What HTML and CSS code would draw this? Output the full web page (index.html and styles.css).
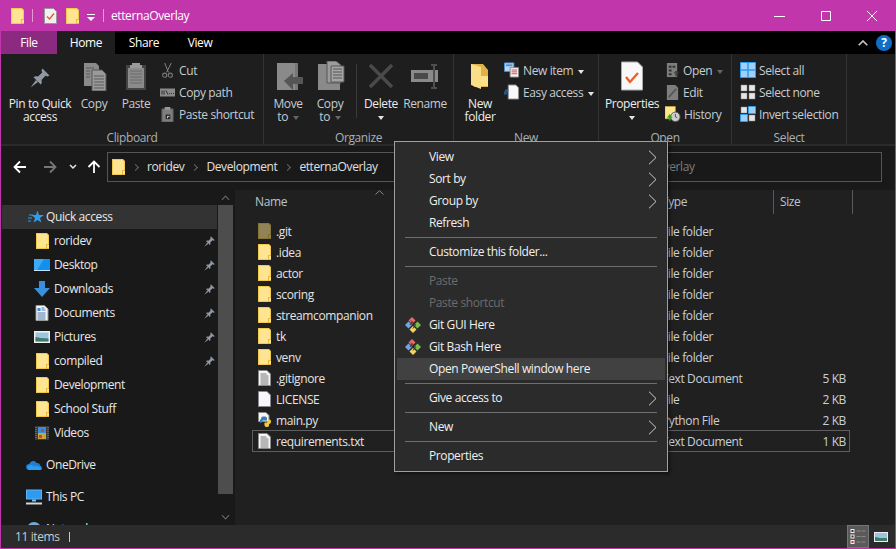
FILE: index.html
```html
<!DOCTYPE html>
<html lang="en">
<head>
<meta charset="utf-8">
<title>etternaOverlay</title>
<link rel="stylesheet" href="styles.css">
</head>
<body>
<svg class="defs" width="0" height="0" aria-hidden="true">
  <defs>
    <symbol id="folder" viewBox="0 0 13 16">
      <path d="M0 0h11l2 2v14H0z" fill="#f2c94f"/>
      <path d="M1 1h9.500l1.500 1.500V15H1z" fill="#ffe591"/>
      <path d="M10 11h3v5h-3z" fill="#e8bb3d"/>
      <path d="M11 12h2v3h-2z" fill="#ffe591"/>
    </symbol>
    <symbol id="pin" viewBox="0 0 20 20">
      <path d="M12.500 0.500 19.500 7.500 17.500 8.500 15.500 7.800 11.500 12c.6 2 .2 3.500-.8 4.500L3.500 9.300c1-1 2.500-1.300 4.500-.8l4.200-4-.7-2z" fill="#8f98a3"/>
      <path d="M6 12 0.500 19.500 8 14z" fill="#8f98a3"/>
    </symbol>
    <symbol id="doc" viewBox="0 0 13 16">
      <path d="M.5.500h8.500l3.500 3.500v11.500H.5z" fill="#f6f6f6" stroke="#8a8a8a"/>
      <path d="M2.500 4h6M2.500 6h8M2.500 8h8M2.500 10h8M2.500 12h8M2.500 14h8" stroke="#777" stroke-width="1"/>
    </symbol>
    <symbol id="blank" viewBox="0 0 13 16">
      <path d="M.5.500h8.500l3.500 3.500v11.500H.5z" fill="#f6f8fc" stroke="#8a8a8a"/>
    </symbol>
    <symbol id="git" viewBox="0 0 16 16">
      <path d="M7 0 10.500 3.500 7 7 3.500 3.500z" fill="#ea6a70"/>
      <path d="M12.500 4.500 16 8 12.500 11.500 9 8z" fill="#76c043"/>
      <path d="M8 9 11.500 12.500 8 16 4.500 12.500z" fill="#f4d35e"/>
      <path d="M3.500 4.500 7 8 3.500 11.500 0 8z" fill="#6da5ee"/>
      <path d="M6 3.500 10.500 8 8 11.500M7 5 5 8" fill="none" stroke="#333" stroke-width="1"/>
    </symbol>
    <symbol id="chev" viewBox="0 0 9 15">
      <path d="M1 .700 8 7.500 1 14.300" fill="none" stroke="#c6ced6" stroke-width="1"/>
    </symbol>
  </defs>
</svg>
<div class="window">
  <header class="titlebar">
    <svg class="ic-folder tb-first"><use href="#folder"/></svg>
    <span class="tb-sep"></span>
    <svg class="tb-check" viewBox="0 0 13 16"><path d="M.5.500h9l3 3v12H.5z" fill="#f0f0f0" stroke="#999"/><path d="M3 8.500 5.500 11 10 5.500" fill="none" stroke="#e2572b" stroke-width="1.300"/></svg>
    <svg class="ic-folder tb-folder"><use href="#folder"/></svg>
    <svg class="tb-drop" viewBox="0 0 8 8"><path d="M0 1h8v1H0z" fill="#fff"/><path d="M0 4h8L4 8z" fill="#fff"/></svg>
    <span class="tb-sep tb-sep2"></span>
    <span class="tb-title">etternaOverlay</span>
    <div class="winbtns">
      <svg class="winbtn" viewBox="0 0 46 30"><path d="M17 15.500h11" stroke="#fff"/></svg>
      <svg class="winbtn" viewBox="0 0 46 30"><path d="M18.500 10.500h9v9h-9z" fill="none" stroke="#fff"/></svg>
      <svg class="winbtn" viewBox="0 0 46 30"><path d="M18 10l10 10M28 10 18 20" stroke="#fff"/></svg>
    </div>
  </header>
  <nav class="tabs">
    <span class="tab tab-file">File</span>
    <span class="tab tab-home">Home</span>
    <span class="tab tab-share">Share</span>
    <span class="tab tab-view">View</span>
    <div class="tabs-right">
      <svg class="collapse" viewBox="0 0 10 6"><path d="M.7 5.300 5 1l4.300 4.300" fill="none" stroke="#c8c8c8" stroke-width="1.600"/></svg>
      <span class="help">?</span>
    </div>
  </nav>
  <section class="ribbon">
    <div class="group g-clip">
      <div class="group-body">
        <div class="big w-pin"><svg class="pinbig"><use href="#pin"/></svg><span class="lbl bright">Pin to Quick<br>access</span></div>
        <div class="big w-copy">
          <svg class="bigicon" viewBox="0 0 30 30"><path d="M5 2h12l3 3v20H5z" fill="#8a8a8a"/><path d="M13 9h10l4 4v17H13z" fill="#9a9a9a" stroke="#555"/><path d="M15 15h10M15 18h10M15 21h10M15 24h10M15 27h10M7 7h8M7 10h4M7 13h4M7 16h4" stroke="#5a5a5a"/></svg>
          <span class="lbl">Copy</span>
        </div>
        <div class="big w-paste">
          <svg class="bigicon" viewBox="0 0 30 30"><path d="M5 4h20v25H5z" fill="#444"/><path d="M7 7h16v20H7z" fill="#8b8b8b"/><path d="M11 2h8v2h2v3H9V4h2z" fill="#9a9a9a"/><path d="M9 10h12M9 13h12M9 16h12M9 19h12M9 22h12" stroke="#6a6a6a"/></svg>
          <span class="lbl">Paste</span>
        </div>
        <div class="small-col sc-clip">
          <div class="small"><svg class="smicon" viewBox="0 0 14 16"><path d="M4 0l4 10M11 0 6 10" stroke="#888" fill="none"/><circle cx="4" cy="13" r="2.200" fill="none" stroke="#777" stroke-width="1.200"/><circle cx="10" cy="13" r="2.200" fill="none" stroke="#777" stroke-width="1.200"/></svg><span>Cut</span></div>
          <div class="small"><svg class="smicon" viewBox="0 0 15 10"><path d="M0 1h15v8H0z" fill="#8a8a8a"/><path d="M2 3v4M4 3v4M6 3l2 4M9 6h1M11 6h1M13 6h1" stroke="#333"/></svg><span>Copy path</span></div>
          <div class="small"><svg class="smicon" viewBox="0 0 14 16"><path d="M1 2h12v14H1z" fill="#7e7e7e" stroke="#555"/><path d="M4 0h6v3H4z" fill="#999"/><path d="M5 8h5v5H5z" fill="#2a2a2a"/><path d="M7 12V10h2" stroke="#ddd" fill="none"/></svg><span>Paste shortcut</span></div>
        </div>
      </div>
      <div class="group-label">Clipboard</div>
    </div>
    <div class="group g-org">
      <div class="group-body">
        <div class="big w-move">
          <svg class="bigicon" viewBox="0 0 30 30"><path d="M4 2h21v27H4z" fill="#8a8a8a"/><path d="M25 2v27h-3V2z" fill="#777"/><path d="M11 20 20 12v4h10v7H20v6z" fill="#565656"/></svg>
          <span class="lbl">Move<br>to <i class="dim-caret"></i></span>
        </div>
        <div class="big w-copyto">
          <svg class="bigicon" viewBox="0 0 30 30"><path d="M3 3h22v26H3z" fill="#8a8a8a"/><path d="M12 0h9l5 4v18H12z" fill="#9c9c9c" stroke="#555"/><path d="M16 5h13v16H16z" fill="#a5a5a5" stroke="#555"/><path d="M18 8h9M18 11h9M18 14h9M18 17h9" stroke="#555"/></svg>
          <span class="lbl">Copy<br>to <i class="dim-caret"></i></span>
        </div>
        <span class="inner-sep"></span>
        <div class="big w-del">
          <svg class="bigicon" viewBox="0 0 30 30"><path d="M4 4 26 26M26 4 4 26" stroke="#4a4a4a" stroke-width="3.500"/></svg>
          <span class="lbl bright">Delete<br><i class="caret"></i></span>
        </div>
        <div class="big w-ren">
          <svg class="bigicon" viewBox="0 0 30 30"><path d="M1 9h27v12H1z" fill="#8a8a8a"/><path d="M4 12h14v6H4z" fill="#4a4a4a"/><path d="M21 4h6M21 27h6M24 4v23" stroke="#4f4f4f" stroke-width="2"/></svg>
          <span class="lbl">Rename</span>
        </div>
      </div>
      <div class="group-label">Organize</div>
    </div>
    <div class="group g-new">
      <div class="group-body">
        <div class="big w-newf">
          <svg class="bigicon" viewBox="0 0 30 30"><path d="M6 3h12l5 6v17H9z" fill="#e0b348"/><path d="M6 3l10 3v22l-10-4z" fill="#fbdf88"/><path d="M16 15h7v10h-7z" fill="#ffe186"/></svg>
          <span class="lbl bright">New<br>folder</span>
        </div>
        <div class="small-col sc-new">
          <div class="small"><svg class="smicon16" viewBox="0 0 17 16"><path d="M.5.500h10v9H.5z" fill="#bcd6ee" stroke="#4a90d9"/><path d="M2 2h7v2H2z" fill="#4a90d9"/><path d="M6.500 5.500h9v10h-9z" fill="#f8f8f8" stroke="#888"/><path d="M8 8h6M8 10h6M8 12h6" stroke="#c44"/></svg><span>New item <i class="caret-r"></i></span></div>
          <div class="small"><svg class="smicon16" viewBox="0 0 17 16"><path d="M4.500.500h8l3 3v12h-11z" fill="#f8f8f8" stroke="#888"/><path d="M1 6h4M0 8h4M0 10h3" stroke="#2f86d8"/></svg><span>Easy access <i class="caret-r"></i></span></div>
        </div>
      </div>
      <div class="group-label">New</div>
    </div>
    <div class="group g-open">
      <div class="group-body">
        <div class="big w-prop">
          <svg class="bigicon" viewBox="0 0 30 30"><path d="M4.500 1h16l5 5v23h-21z" fill="#f8f8f8" stroke="#aaa"/><path d="M9 16l4 5 8-9" fill="none" stroke="#e8622c" stroke-width="2.400"/></svg>
          <span class="lbl bright">Properties<br><i class="caret"></i></span>
        </div>
        <div class="small-col sc-open">
          <div class="small"><svg class="smicon" viewBox="0 0 14 16"><path d="M1 0h11v15H1z" fill="#7e7e7e"/><path d="M3 3h3v2H3zM7 3h3v2H7zM3 7h3v2H3zM3 11h3v2H3z" fill="#333"/><path d="M8 11l3-3 3 3h-2v3h-2v-3z" fill="#444"/></svg><span>Open <i class="caret-dim"></i></span></div>
          <div class="small"><svg class="smicon" viewBox="0 0 14 16"><path d="M1 0h9l3 3v13H1z" fill="#7e7e7e"/><path d="M3 13 11 4" stroke="#555" stroke-width="2"/></svg><span>Edit</span></div>
          <div class="small"><svg class="smicon16" viewBox="0 0 17 16"><path d="M0 0h11v13H0z" fill="#fde68c" stroke="#d8b33f" stroke-width=".6"/><circle cx="11" cy="11" r="5" fill="#cfcfcf" stroke="#555"/><path d="M11 8v3l2 1" stroke="#444" fill="none"/><path d="M2 12 5 8l3 4H6v3H4v-3z" fill="#2ea52e"/></svg><span>History</span></div>
        </div>
      </div>
      <div class="group-label">Open</div>
    </div>
    <div class="group g-sel">
      <div class="group-body">
        <div class="small-col sc-sel">
          <div class="small"><svg class="smicon16" viewBox="0 0 16 16"><path d="M.5.500h15v15H.5z" fill="#9fd0fb" stroke="#2d9bf0"/><path d="M8 0v16M0 8h16" stroke="#2d9bf0" stroke-width="1.500"/></svg><span>Select all</span></div>
          <div class="small"><svg class="smicon16" viewBox="0 0 16 16"><path d="M1 1h6v6H1zM9 1h6v6H9zM1 9h6v6H1zM9 9h6v6H9z" fill="#e6e6e6" stroke="#888" stroke-width=".5"/></svg><span>Select none</span></div>
          <div class="small"><svg class="smicon16" viewBox="0 0 16 16"><path d="M1 1h6v6H1zM9 9h6v6H9z" fill="#e6e6e6" stroke="#888" stroke-width=".5"/><path d="M8.500.500h7v7h-7zM.5 8.500h7v7h-7z" fill="#9fd0fb" stroke="#2d9bf0"/></svg><span>Invert selection</span></div>
        </div>
      </div>
      <div class="group-label">Select</div>
    </div>
  </section>
  <div class="addressbar">
    <svg class="navarrow" viewBox="0 0 14 14"><path d="M13 7H2M7 1.500 1.500 7 7 12.500" fill="none" stroke="#fff" stroke-width="1.800"/></svg>
    <svg class="navarrow fwd" viewBox="0 0 14 14"><path d="M1 7h11M7 1.500 12.500 7 7 12.500" fill="none" stroke="#777" stroke-width="1.800"/></svg>
    <svg class="navchev" viewBox="0 0 8 6"><path d="M1 1l3 3 3-3" fill="none" stroke="#e6e6e6" stroke-width="1.500"/></svg>
    <svg class="navarrow up" viewBox="0 0 14 14"><path d="M7 13V2M1.500 7 7 1.500 12.500 7" fill="none" stroke="#fff" stroke-width="1.800"/></svg>
    <div class="addrbox">
      <svg class="ic-folder"><use href="#folder"/></svg>
      <i class="crumb-sep"></i><span>roridev</span>
      <i class="crumb-sep"></i><span>Development</span>
      <i class="crumb-sep"></i><span>etternaOverlay</span>
    </div>
    <div class="searchbox">Search etternaOverlay</div>
  </div>
  <main class="main">
    <aside class="navpane">
      <div class="navlist">
        <div class="navrow qa"><svg class="navico" viewBox="0 0 16 16"><path d="M9.500 1.500 11 6l4.800.1-3.800 2.900 1.400 4.600L9.500 10.900l-3.900 2.700L7 9 3.200 6.100 8 6z" fill="#2f9cf0"/><path d="M1 6h4M0 9h4M0 12h3" stroke="#2f9cf0"/></svg><span>Quick access</span></div>
        <div class="navrow child"><span class="icbox"><svg class="ic-folder"><use href="#folder"/></svg></span><span class="grow">roridev</span><svg class="ic-pin"><use href="#pin"/></svg></div>
        <div class="navrow child"><span class="icbox"><svg class="ico16" viewBox="0 0 16 12"><path d="M0 0h16v11H0z" fill="#1390ee"/><path d="M0 0h10L3 11H0z" fill="#3eaaf5"/><path d="M0 11h16v1H0z" fill="#c7e4fb"/></svg></span><span class="grow">Desktop</span><svg class="ic-pin"><use href="#pin"/></svg></div>
        <div class="navrow child"><span class="icbox"><svg class="ico16" viewBox="0 0 16 16"><path d="M5 0h6v7h5l-8 9-8-9h5z" fill="#3a8fdc"/></svg></span><span class="grow">Downloads</span><svg class="ic-pin"><use href="#pin"/></svg></div>
        <div class="navrow child"><span class="icbox"><svg class="ico16" viewBox="0 0 13 16"><path d="M.5.500h8.500l3.500 3.500v11.500H.5z" fill="#f4f4f4" stroke="#999"/><path d="M2 3h3v3H2z" fill="#3a8fdc"/><path d="M6 3h3M6 5h4M2 8h8M2 10h8M2 12h8M2 14h8" stroke="#4a7fb0"/></svg></span><span class="grow">Documents</span><svg class="ic-pin"><use href="#pin"/></svg></div>
        <div class="navrow child"><span class="icbox"><svg class="ico16" viewBox="0 0 16 12"><path d="M0 0h16v12H0z" fill="#f0f0f0"/><path d="M1.500 1.500h13v9h-13z" fill="#9cc4e0"/><path d="M1.500 6l5 1 8 .5v3h-13z" fill="#3f7a6a"/></svg></span><span class="grow">Pictures</span><svg class="ic-pin"><use href="#pin"/></svg></div>
        <div class="navrow child"><span class="icbox"><svg class="ic-folder"><use href="#folder"/></svg></span><span class="grow">compiled</span><svg class="ic-pin"><use href="#pin"/></svg></div>
        <div class="navrow child"><span class="icbox"><svg class="ic-folder"><use href="#folder"/></svg></span><span class="grow">Development</span></div>
        <div class="navrow child"><span class="icbox"><svg class="ic-folder"><use href="#folder"/></svg></span><span class="grow">School Stuff</span></div>
        <div class="navrow child"><span class="icbox"><svg class="ico14" viewBox="0 0 14 14"><path d="M0 0h14v14H0z" fill="#3a3a3a"/><path d="M3 1h8v6H3z" fill="#3a8fdc"/><path d="M3 7h8v6H3z" fill="#c9a63a"/><path d="M6 3h3v3H6zM4 9h3v3H4z" fill="#c04848"/><path d="M1 1v12M13 1v12" stroke="#888" stroke-dasharray="1 1"/></svg></span><span class="grow">Videos</span></div>
        <div class="navrow top"><svg class="navico" viewBox="0 0 16 11"><path d="M3 10.500a3 3 0 0 1 .3-6C4.500 1 9 .500 10.300 3.500c2-.5 3.700.7 3.800 2.500A2.300 2.300 0 0 1 13.500 10.500z" fill="#1d7fd4"/><path d="M3 10.500a2.500 2.500 0 0 1 .8-4.800c2-.3 3 0 4.200 1.300 2-1 6 0 7.500 1.500.5 1 0 2-1.500 2z" fill="#2c9cf0"/></svg><span>OneDrive</span></div>
        <div class="navrow top"><svg class="navico" viewBox="0 0 16 15"><path d="M0 0h16v10H0z" fill="#58b4f4"/><path d="M1 1h14v8H1z" fill="#2e9bee"/><path d="M6 10h4v2H6z" fill="#88bfe8"/><path d="M0 13h16v2H0z" fill="#cfd8df"/></svg><span>This PC</span></div>
        <div class="navrow top"><svg class="navico" viewBox="0 0 16 16"><circle cx="8" cy="8" r="7" fill="#7aa7cf"/><path d="M3 5h5v5H3z" fill="#e5edf2"/></svg><span>Network</span></div>
      </div>
      <div class="scrollbar">
        <svg class="sb-arrow" viewBox="0 0 10 6"><path d="M1 5l4-4 4 4" fill="none" stroke="#666" stroke-width="1.300"/></svg>
        <div class="sb-thumb"></div>
        <svg class="sb-arrow" viewBox="0 0 10 6"><path d="M1 1l4 4 4-4" fill="none" stroke="#666" stroke-width="1.300"/></svg>
      </div>
    </aside>
    <section class="content">
      <div class="colhead">
        <div class="col-name">Name<svg class="sortup" viewBox="0 0 9 5"><path d="M.5 4.500 4.500 .7l4 3.800" fill="none" stroke="#8a8a8a"/></svg></div>
        <div class="col-type">Type</div>
        <div class="col-size">Size</div>
      </div>
      <div class="rows">
        <div class="row"><div class="f-name"><svg class="ic-folder dim"><use href="#folder"/></svg>.git</div><div class="f-type">File folder</div><div class="f-size"></div></div>
        <div class="row"><div class="f-name"><svg class="ic-folder"><use href="#folder"/></svg>.idea</div><div class="f-type">File folder</div><div class="f-size"></div></div>
        <div class="row"><div class="f-name"><svg class="ic-folder"><use href="#folder"/></svg>actor</div><div class="f-type">File folder</div><div class="f-size"></div></div>
        <div class="row"><div class="f-name"><svg class="ic-folder"><use href="#folder"/></svg>scoring</div><div class="f-type">File folder</div><div class="f-size"></div></div>
        <div class="row"><div class="f-name"><svg class="ic-folder"><use href="#folder"/></svg>streamcompanion</div><div class="f-type">File folder</div><div class="f-size"></div></div>
        <div class="row"><div class="f-name"><svg class="ic-folder"><use href="#folder"/></svg>tk</div><div class="f-type">File folder</div><div class="f-size"></div></div>
        <div class="row"><div class="f-name"><svg class="ic-folder"><use href="#folder"/></svg>venv</div><div class="f-type">File folder</div><div class="f-size"></div></div>
        <div class="row"><div class="f-name"><svg class="ic-folder"><use href="#doc"/></svg>.gitignore</div><div class="f-type">Text Document</div><div class="f-size">5 KB</div></div>
        <div class="row"><div class="f-name"><svg class="ic-folder"><use href="#blank"/></svg>LICENSE</div><div class="f-type">File</div><div class="f-size">2 KB</div></div>
        <div class="row"><div class="f-name"><svg class="ic-folder" viewBox="0 0 13 16"><path d="M.5.500h7.500l3 3v6h-10.500z" fill="#f6f6f6" stroke="#8a8a8a"/><path d="M3 7c0-2 1-2.500 3-2.500S9 5 9 6.500v2H5.500C4 8.500 3.500 9.500 3.500 11H2.500C1.500 10 1.500 7.500 3 7z" fill="#3b7cb5"/><path d="M10 8c0 2-1 2.500-2 2.500H6.500v3C7.500 15.500 10 15.500 11 14v-2c1.500 0 2-1 2-2.500C13 8 12 7 10 8z" fill="#f5c93a"/></svg>main.py</div><div class="f-type">Python File</div><div class="f-size">2 KB</div></div>
        <div class="row focused"><div class="f-name"><svg class="ic-folder"><use href="#doc"/></svg>requirements.txt</div><div class="f-type">Text Document</div><div class="f-size">1 KB</div></div>
      </div>
    </section>
  </main>
  <footer class="status">
    <span class="count">11 items</span>
    <span class="st-sep"></span>
    <div class="viewbtns">
      <span class="vb-on"><svg class="vb-details" viewBox="0 0 15 15"><path d="M0 0h4v4H0zM0 5.500h4v4H0zM0 11h4v4H0z" fill="#eee"/><path d="M1 1h2v2H1zM1 6.500h2v2H1z" fill="#333"/><path d="M1 12h2v2H1z" fill="#d33"/><path d="M6 2h4M11 2h4M6 7.500h4M11 7.500h4M6 13h4M11 13h4" stroke="#8a8a8a"/></svg></span>
      <svg class="vb-large" viewBox="0 0 14 10"><path d="M0 0h14v10H0z" fill="#eee"/><path d="M1 1h12v8H1z" fill="#9cc4e0"/><path d="M1 5l5 1 7 0v3H1z" fill="#3f7a6a"/></svg>
    </div>
  </footer>
  <div class="menu">
    <div class="mi">View<svg class="mi-arrow"><use href="#chev"/></svg></div>
    <div class="mi">Sort by<svg class="mi-arrow"><use href="#chev"/></svg></div>
    <div class="mi">Group by<svg class="mi-arrow"><use href="#chev"/></svg></div>
    <div class="mi">Refresh</div>
    <div class="msep"></div>
    <div class="mi">Customize this folder...</div>
    <div class="msep"></div>
    <div class="mi off">Paste</div>
    <div class="mi off">Paste shortcut</div>
    <div class="mi"><svg class="mi-git"><use href="#git"/></svg>Git GUI Here</div>
    <div class="mi"><svg class="mi-git"><use href="#git"/></svg>Git Bash Here</div>
    <div class="mi hot">Open PowerShell window here</div>
    <div class="msep"></div>
    <div class="mi">Give access to<svg class="mi-arrow"><use href="#chev"/></svg></div>
    <div class="msep"></div>
    <div class="mi">New<svg class="mi-arrow"><use href="#chev"/></svg></div>
    <div class="msep"></div>
    <div class="mi">Properties</div>
  </div>
</div>
</body>
</html>
```
FILE: styles.css
```css
* { box-sizing: border-box; }
html, body { margin: 0; padding: 0; background: #202020; }
body { font: 12px/16px "Open Sans", "Noto Sans", sans-serif; letter-spacing: -0.39px; color: #e6e6e6; }
.defs { position: absolute; }
svg { display: block; flex: none; }
i { font-style: normal; }

.window { position: relative; width: 896px; height: 549px; display: flex; flex-direction: column; overflow: hidden; background: #c236ab; padding: 0 1px 1px; }

/* title bar */
.titlebar { height: 31px; display: flex; align-items: center; background: #c236ab; color: #fff; flex: none; }
.ic-folder { width: 13px; height: 16px; }
.tb-first { margin-left: 10px; }
.tb-sep { width: 1px; height: 13px; background: #e39ad6; margin-left: 8px; }
.tb-check { width: 13px; height: 16px; margin-left: 11px; }
.tb-folder { margin-left: 9px; }
.tb-drop { width: 8px; height: 8px; margin-left: 8px; margin-top: 2px; }
.tb-sep2 { margin-left: 8px; }
.tb-title { margin-left: 7px; }
.winbtns { margin-left: auto; display: flex; }
.winbtn { width: 46px; height: 30px; }

/* tabs */
.tabs { height: 23px; flex: none; display: flex; align-items: center; background: #000; color: #fff; }
.tab { height: 23px; line-height: 24px; text-align: center; }
.tab-file { width: 56px; background: #8c2a82; }
.tab-home { width: 58px; background: #1e1e1e; }
.tab-share { width: 58px; }
.tab-view { width: 54px; }
.tabs-right { margin-left: auto; display: flex; align-items: center; }
.collapse { width: 10px; height: 6px; margin-right: 8px; }
.help { width: 16px; height: 16px; margin-right: 3px; border-radius: 50%; background: #0f6fc6; color: #fff; font: bold 12px/16px "Open Sans", sans-serif; text-align: center; }

/* ribbon */
.ribbon { height: 92px; flex: none; display: flex; background: #1e1e1e; border-bottom: 2px solid #2a2a2a; color: #c6ccd2; }
.group { display: flex; flex-direction: column; border-right: 1px solid #333; padding-top: 3px; }
.g-clip { width: 263px; }
.g-org { width: 190px; }
.g-new { width: 145px; }
.g-open { width: 133px; }
.g-sel { width: 115px; }
.group-body { height: 74px; display: flex; align-items: flex-start; }
.group-label { height: 13px; line-height: 14px; text-align: center; color: #a9b0b7; }
.big { display: flex; flex-direction: column; align-items: center; text-align: center; flex: none; padding-top: 4px; line-height: 13px; }
.bigicon { width: 30px; height: 30px; }
.pinbig { width: 20px; height: 20px; margin: 7px 0 3px; }
.lbl { margin-top: 6px; display: block; }
.bright { color: #ececec; }
.w-pin { width: 78px; }
.w-copy { width: 30px; }
.w-paste { width: 30px; margin-left: 12px; }
.sc-clip { margin-left: 9px; }
.w-move { width: 42px; margin-left: 3px; }
.w-copyto { width: 42px; }
.inner-sep { width: 1px; height: 54px; background: #3a3a3a; margin: 7px 0 0 5px; }
.w-del { width: 44px; margin-left: 2px; }
.w-ren { width: 44px; }
.w-newf { width: 50px; margin-left: 1px; margin-right: -1px; }
.w-prop { width: 66px; }
.sc-sel { margin-left: 8px; }
.small-col { display: flex; flex-direction: column; padding-top: 2px; }
.small { height: 22px; display: flex; align-items: center; gap: 4px; white-space: nowrap; }
.small span { padding-top: 2px; }
.sc-new .small, .sc-open .small, .sc-sel .small { gap: 3px; }
.smicon { width: 15px; height: 15px; }
.smicon16 { width: 16px; height: 16px; }
.caret, .caret-r, .caret-dim, .dim-caret { display: inline-block; width: 0; height: 0; border: 3px solid transparent; border-top: 4px solid #e6e6e6; border-bottom: 0; vertical-align: middle; margin-left: 2px; }
.caret { margin-left: 0; }
.caret-dim, .dim-caret { border-top-color: #666; }

/* address bar */
.addressbar { height: 44px; flex: none; display: flex; align-items: center; background: #191919; padding-bottom: 2px; color: #e0e0e0; }
.navarrow { width: 14px; height: 14px; margin-left: 12px; }
.navarrow.fwd { margin-left: 16px; }
.navchev { width: 8px; height: 6px; margin-left: 12px; }
.navarrow.up { margin-left: 10px; margin-right: 6px; }
.addrbox { width: 462px; height: 30px; border: 1px solid #555; display: flex; align-items: center; padding-left: 4px; }
.addrbox .ic-folder { margin-right: -1px; }
.addrbox span { line-height: 16px; }
.crumb-sep { width: 5px; height: 5px; border-top: 1.500px solid #666; border-right: 1.500px solid #666; transform: rotate(45deg); margin: 0 9px; }
.addrbox span + .crumb-sep { margin-left: 8px; }
.searchbox { width: 310px; height: 30px; margin-left: 3px; border: 1px solid #555; line-height: 28px; padding-left: 5px; color: #7d7d7d; }

/* main */
.main { flex: 1; display: flex; min-height: 0; }
.navpane { width: 234px; flex: none; display: flex; background: #191919; overflow: hidden; }
.navlist { width: 217px; flex: none; padding: 15px 0 0 1px; }
.navrow { height: 24px; display: flex; align-items: center; color: #e8e8e8; }
.navrow.qa { background: #333; margin-right: 1px; padding-left: 26px; gap: 2px; }
.navrow.child { padding-left: 31px; padding-right: 3px; }
.navrow.top { padding-left: 24px; gap: 4px; margin-top: 8px; }
.navico { width: 16px; height: 16px; }
.icbox { width: 18px; height: 18px; display: flex; align-items: center; justify-content: center; margin-right: 3px; }
.ico16 { width: 16px; height: 16px; }
.ico14 { width: 14px; height: 14px; }
.grow { flex: 1; }
.ic-pin { width: 11px; height: 11px; }
.scrollbar { width: 15px; flex: none; display: flex; flex-direction: column; align-items: center; }
.sb-arrow { width: 9px; height: 6px; margin: 5px 0 4px; }
.sb-thumb { width: 15px; height: 289px; background: #4d4d4d; }
.scrollbar .sb-arrow:last-child { margin-top: 20px; }

.content { flex: 1; background: #202020; min-width: 0; padding-left: 17px; }
.colhead { height: 30px; display: flex; color: #b9c4ce; align-items: flex-start; }
.colhead > div { height: 24px; line-height: 24px; }
.col-name { width: 410px; padding-left: 3px; position: relative; }
.sortup { position: absolute; left: 123px; top: 0; width: 9px; height: 5px; }
.col-type { width: 111px; }
.col-size { width: 80px; padding-left: 6px; border-left: 1px solid #5a5a5a; border-right: 1px solid #5a5a5a; }
.row { height: 21px; width: 598px; display: flex; align-items: center; color: #e4e4e4; padding-top: 2px; }
.f-name { width: 410px; display: flex; align-items: center; gap: 5px; padding-left: 6px; }
.f-name svg { margin-bottom: 2px; }
.f-type { width: 111px; color: #c8d0d8; }
.f-size { flex: 1; text-align: right; padding-right: 4px; color: #c8d0d8; }
.dim { opacity: .5; }
.row.focused { height: 22px; box-shadow: inset 0 0 0 1px #5e5e5e; }

/* status */
.status { height: 23px; flex: none; display: flex; align-items: center; background: #2b2b2b; color: #c6ccd2; padding-left: 14px; }
.count { width: 54px; }
.st-sep { width: 1px; height: 10px; background: #c8c8c8; }
.viewbtns { margin-left: auto; display: flex; align-items: center; margin-right: 7px; }
.vb-on { width: 22px; height: 23px; background: #5a5a5a; border: 1px solid #757575; display: flex; align-items: center; justify-content: center; }
.vb-details { width: 16px; height: 15px; }
.vb-large { width: 14px; height: 10px; margin-left: 5px; }

/* context menu */
.menu { position: absolute; left: 394px; top: 141px; width: 274px; height: 331px; padding: 4px 2px; background: #2b2b2b; border: 1px solid #a0a0a0; box-shadow: 2px 2px 3px rgba(0,0,0,.45); color: #f0f0f0; }
.mi { height: 22px; line-height: 22px; padding-left: 32px; position: relative; }
.mi.off { color: #6c6c6c; }
.mi.hot { background: #414141; }
.msep { height: 1px; background: #6e6e6e; margin: 3px 8px; }
.mi-arrow { position: absolute; right: 8px; top: 4px; width: 9px; height: 15px; }
.mi-git { position: absolute; left: 8px; top: 3px; width: 16px; height: 16px; }
```
